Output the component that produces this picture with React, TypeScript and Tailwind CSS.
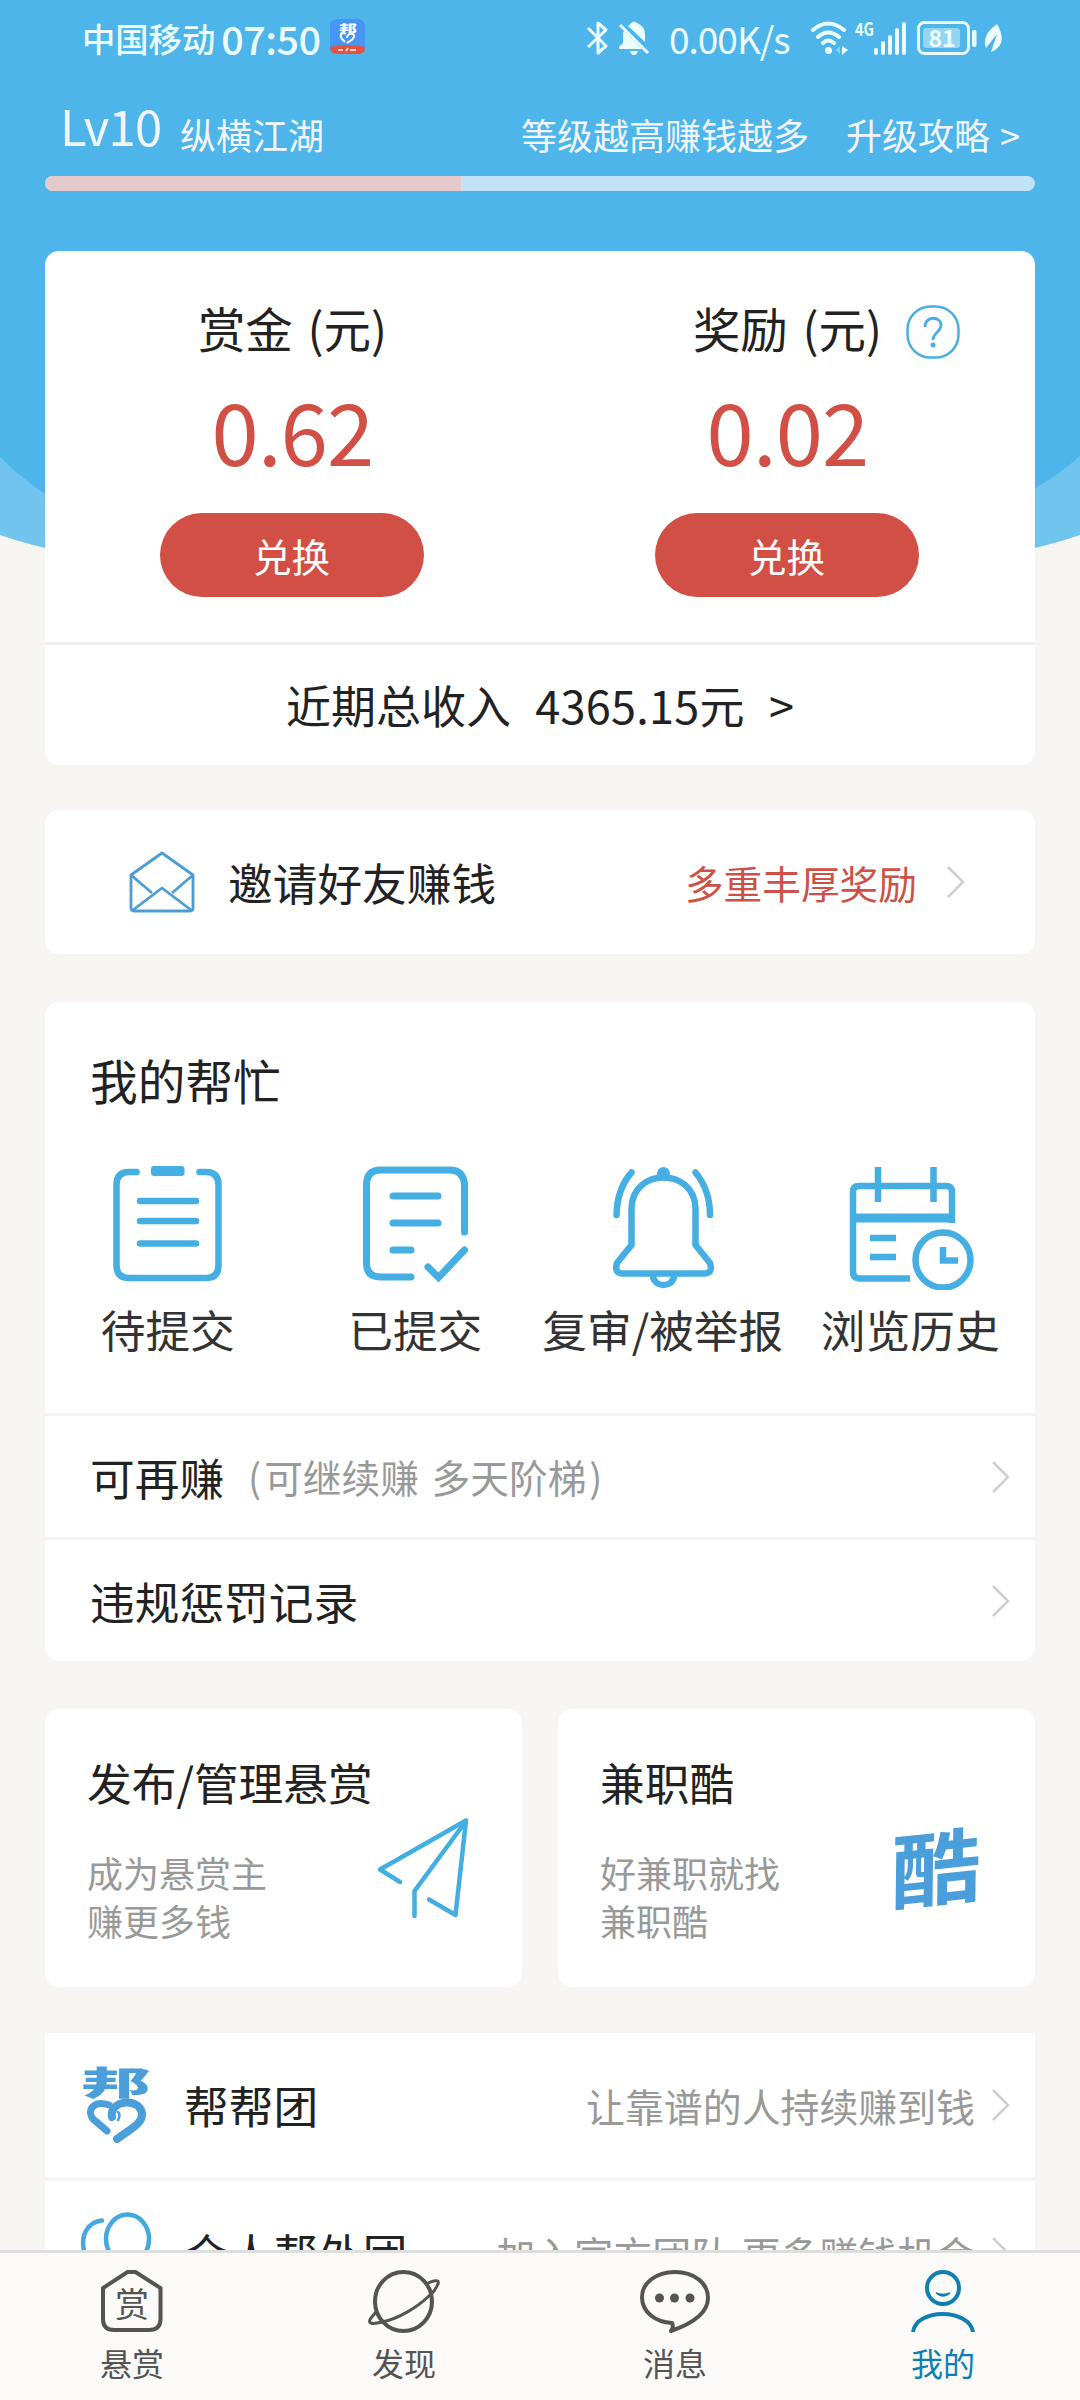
import type { ReactNode } from 'react'

function Chevron() {
  return (
    <svg className="shrink-0" width="20" height="34" viewBox="0 0 20 34" fill="none" stroke="#cfcfcf" strokeWidth="2.5">
      <path d="M1 2 L16 17 L1 32" />
    </svg>
  )
}

function StatusBar() {
  return (
    <div className="flex h-[76px] shrink-0 items-center pl-[82px] pr-[75px] text-[#ecfdff]">
      <span className="text-[33.3px] font-medium leading-none">中国移动</span>
      <span className="ml-[6px] w-[102px] whitespace-nowrap text-[39.500px] font-medium leading-none tracking-[-0.5px]">07:50</span>
      {/* App notification badge */}
      <svg className="ml-[7px] -mt-1 overflow-visible" width="35" height="35" viewBox="0 0 35 35">
        <rect width="35" height="35" rx="7" fill="#4596f5" />
        <path d="M0 28 Q17 24 35 28 Q35 35 28 35 H7 Q0 35 0 28Z" fill="#ec4f3c" />
        <text x="9" y="13.500" fontSize="11" fontWeight="900" textLength="18" lengthAdjust="spacingAndGlyphs" fill="#fff">邦</text>
        <path d="M16 15 C12 12 9 16 12 20 L15 23 M17 19 C17 14 25 13 24 18 C23 21 20 22 17 24" fill="none" stroke="#fff" strokeWidth="2" />
        <path d="M8 31H13M16 32L18 29M20 31H26" stroke="#fff" strokeWidth="1.5" />
      </svg>

      <div className="ml-auto flex -translate-x-px items-center">
        <svg width="23" height="36" viewBox="0 0 23 36" fill="none" stroke="currentColor" strokeWidth="3" strokeLinejoin="round">
          <path d="M2 8 L20 26 L12 33 V3 L20 10 L2 27" />
        </svg>
        <svg className="ml-[9px]" width="32" height="36" viewBox="0 0 32 36">
          <path d="M10 6 Q12 5 13 3 Q16 0 19 3 Q27 6 27 15 V22 Z M6 11 L24 29 H1 V27 L5 23 V15 Q5 12 6 11Z M12 31H20Q19 35 16 35T12 31Z" fill="currentColor" />
          <path d="M2 5 L30 33" stroke="currentColor" strokeWidth="3" />
        </svg>
        <span className="ml-[19px] w-[120px] whitespace-nowrap text-[37px] leading-none tracking-[-1px]">0.00K/s</span>
        <svg className="ml-[21px]" width="38" height="36" viewBox="0 0 38 36" fill="none" stroke="currentColor" strokeWidth="4" strokeLinecap="round">
          <path d="M3 10 Q18 -3 34 10M8 17 Q18 8 29 17M13 23 Q18 18 24 23" />
          <circle cx="18.500" cy="30.500" r="3.500" fill="currentColor" stroke="none" />
          <path d="M26 30 l4 -4 v8z" fill="currentColor" stroke="none" opacity=".4" />
          <path d="M32 26 l6 4 l-6 5z" fill="currentColor" stroke="none" />
        </svg>
        <svg className="ml-[7px] overflow-visible" width="54" height="36" viewBox="0 0 54 36">
          <text x="0" y="16" fontSize="18" fontWeight="700" textLength="19" lengthAdjust="spacingAndGlyphs" fill="currentColor">4G</text>
          <path d="M21 30V33M28 23V33M35 17V33M42 10V33M49 4V33" stroke="currentColor" strokeWidth="4" strokeLinecap="round" />
        </svg>
        <svg className="ml-[8px] overflow-visible" width="61" height="36" viewBox="0 0 61 36">
          <rect x="1.500" y="2.500" width="50" height="31" rx="6" fill="none" stroke="currentColor" strokeWidth="3" />
          <rect x="6" y="8" width="37" height="20" rx="3" fill="currentColor" opacity=".45" />
          <text x="25" y="26.500" textAnchor="middle" fontSize="23" fontWeight="700" fill="currentColor">81</text>
          <rect x="55" y="10" width="4.500" height="17" rx="2" fill="currentColor" />
        </svg>
        <svg className="ml-[4px]" width="22" height="30" viewBox="0 0 22 30">
          <path d="M4 25 Q-1 12 15 1 Q27 22 9 29 L15 11 Z" fill="currentColor" />
        </svg>
      </div>
    </div>
  )
}

function LevelHeader() {
  return (
    <div className="px-[45px]">
      <div className="flex h-[100px] items-start pl-[15px] pr-[15px] text-[#f3f5fd]">
        <span className="mt-[24px] w-[103px] whitespace-nowrap text-[49px] leading-[50px] tracking-[-0.8px]">Lv10</span>
        <span className="ml-[17px] mt-[34px] text-[36px] leading-[48px]">纵横江湖</span>
        <span className="ml-auto mt-[34px] text-[36px] leading-[48px]">等级越高赚钱越多</span>
        <span className="ml-[37px] mt-[34px] text-[36px] leading-[48px] [word-spacing:2px]">升级攻略 &gt;</span>
      </div>
      <div className="h-[15px] overflow-hidden rounded-full bg-[#c2e3f6]">
        <div className="h-full w-[416px] bg-[#e4cacb]" />
      </div>
    </div>
  )
}

function Balance({ title, amount, help }: { title: string; amount: string; help?: boolean }) {
  return (
    <div className="flex w-[495px] flex-col items-center pt-[49px]">
      <div className="relative whitespace-nowrap text-[47.500px] leading-[56px] [word-spacing:4px]">
        {title}
        {help && (
          <svg className="absolute left-full top-[5px] ml-[24px]" width="54" height="54" viewBox="0 0 54 54">
            <rect x="1.500" y="1.500" width="51" height="51" rx="23" fill="none" stroke="#4aaee3" strokeWidth="2.500" />
            <path d="M19 22 C19 10 36 11 35 21 C34 27 27 28 27 35" fill="none" stroke="#4aaee3" strokeWidth="2.800" />
            <circle cx="27" cy="40" r="2.500" fill="#4aaee3" />
          </svg>
        )}
      </div>
      <div className="mt-[23px] text-[85px] leading-[100px] tracking-[-0.8px] text-[#d14f45]">{amount}</div>
      <button className="mt-[34px] h-[84px] w-[264px] -translate-x-px rounded-full bg-[#d14f45] text-[38.500px] leading-none text-white">兑换</button>
    </div>
  )
}

function InviteIcon() {
  return (
    <svg width="66" height="64" viewBox="0 0 66 64" fill="none" stroke="#4b9dd3" strokeWidth="2.800" strokeLinejoin="round">
      <path d="M2 25 L33 3 L64 25 V58 Q64 61 61 61 H5 Q2 61 2 58Z" />
      <path d="M2 25 L23 43M64 25 L43 43M4 60 L33 38 L62 60" />
    </svg>
  )
}

const helpItems: { label: string; icon: ReactNode }[] = [
  {
    label: '待提交',
    icon: (
      <svg className="-translate-x-px" width="120" height="130" viewBox="0 0 120 130" fill="none" stroke="#45aee2" strokeWidth="6.500" strokeLinecap="round">
        <path d="M28.500 12 H21 Q8.500 12 8.500 25 V105 Q8.500 118 21 118 H98 Q110.500 118 110.500 105 V25 Q110.500 12 98 12 H91.500" />
        <path d="M32 41H88M32 61H88M32 83.500H88" />
        <rect x="43" y="6" width="33.500" height="10" rx="3" fill="#45aee2" stroke="none" />
      </svg>
    ),
  },
  {
    label: '已提交',
    icon: (
      <svg width="120" height="130" viewBox="0 0 120 130" fill="none" stroke="#45aee2" strokeWidth="7" strokeLinecap="round">
        <path d="M108.500 72 V24 Q107 10 94 10 H25 Q10.500 10 10.500 25 V103 Q10.500 117 25 117 H55" />
        <path d="M37 36H82M37 63H82M37 90H55" />
        <path d="M72 107 L82.500 117.500 L108.500 90" />
      </svg>
    ),
  },
  {
    label: '复审/被举报',
    icon: (
      <svg width="120" height="130" viewBox="0 0 120 130" fill="none" stroke="#45aee2" strokeWidth="6.500" strokeLinecap="round">
        <path d="M27.500 12.500 Q13 29 12.500 55M91.500 12.500 Q106 30 106 55" />
        <path d="M27.500 49 C27.500 7 91.500 7 91.500 49 V85 L106 103 Q109 113 101 113.500 H18 Q10 113 13 103 L27.500 85Z" strokeLinejoin="round" />
        <path d="M49 116 C50 128 69 128 70 116" />
        <circle cx="59.500" cy="13.500" r="6.500" fill="#45aee2" stroke="none" />
      </svg>
    ),
  },
  {
    label: '浏览历史',
    icon: (
      <svg width="130" height="130" viewBox="0 0 130 130" fill="none" stroke="#45aee2" strokeWidth="6.500">
        <path d="M64 118.500 H13 Q7 118 7 112 V32 Q7 26 13 26 H100 Q106 26 106 32 V63" />
        <path d="M8 58H105" strokeWidth="9" />
        <path d="M32 7V42M87.500 7V42M24 78H50M24 97H50" />
        <circle cx="97" cy="100" r="27.500" />
        <path d="M97 87V100.500H112" />
      </svg>
    ),
  },
]

function PlaneIcon() {
  return (
    <svg width="102" height="110" viewBox="0 0 102 110" fill="none" stroke="#42aee2" strokeWidth="4.500" strokeLinecap="round" strokeLinejoin="round">
      <path d="M29 70 L9 57.500 L95 8.500 L84.500 103 L58 87.500" />
      <path d="M95 9 L43.500 79 V104" />
    </svg>
  )
}

function BangIcon() {
  return (
    <svg className="overflow-visible" width="72" height="82" viewBox="0 0 72 82">
      <text x="1" y="31" fontSize="33" fontWeight="900" textLength="70" lengthAdjust="spacingAndGlyphs" fill="#4a9fdb">邦</text>
      <g fill="none" stroke="#4a9fdb" strokeLinecap="round">
        <path d="M29 41 C14 36 6 46 13 55 L27 67" strokeWidth="7" />
        <path d="M32 53 C29 36 59 33 62 49 C63 60 50 65 37 75" strokeWidth="8" />
        <path d="M38 48 Q41 51 38 56" strokeWidth="2.500" />
      </g>
    </svg>
  )
}

function GroupIcon() {
  return (
    <svg width="72" height="82" viewBox="0 0 72 82" fill="none" stroke="#45a8de" strokeWidth="4.500" strokeLinecap="round">
      <ellipse cx="47.500" cy="27" rx="21.500" ry="24.500" />
      <path d="M22 8.500 C-2 11 -3 46 18 54M18 78 Q21 57 48 57 T70 78" />
    </svg>
  )
}

function GroupRow({ icon, title, note }: { icon: ReactNode; title: string; note: string }) {
  return (
    <div className="flex h-[144px] shrink-0 items-center bg-white pl-[35px] pr-[23px]">
      {icon}
      <span className="ml-[32px] text-[44.700px]">{title}</span>
      <span className="ml-auto mr-[17px] text-[38.900px] text-[#999] [word-spacing:3px]">{note}</span>
      <Chevron />
    </div>
  )
}

const tabs: { label: string; active?: boolean; icon: ReactNode }[] = [
  {
    label: '悬赏',
    icon: (
      <svg width="72" height="70" viewBox="0 0 72 70">
        <path d="M31.500 6 H39.500 L64.500 22 V53 Q64.500 64 53 64 H18 Q7 64 7 53 V22Z" fill="none" stroke="currentColor" strokeWidth="4" />
        <text x="36" y="50.500" textAnchor="middle" fontSize="34" fill="currentColor">赏</text>
      </svg>
    ),
  },
  {
    label: '发现',
    icon: (
      <svg width="80" height="70" viewBox="0 0 80 70" fill="none" stroke="currentColor">
        <ellipse cx="39.500" cy="35.500" rx="28.500" ry="29.500" strokeWidth="4" />
        <path d="M63 17.500 C72 13 77 14 73 20 Q71 25 66 29 C54 41 34 53 18 56 C7 59 3 57 7 52 L12 46" strokeWidth="3" />
      </svg>
    ),
  },
  {
    label: '消息',
    icon: (
      <svg width="76" height="70" viewBox="0 0 76 70" fill="none" stroke="currentColor" strokeWidth="4" strokeLinejoin="round">
        <path d="M35 57 C18 56 5 46 5 31 C5 17 19 6 38 6 C57 6 71 17 71 32 C71 46 57 57 34 65 Q37 61 35 57Z" />
        <g fill="currentColor" stroke="none">
          <circle cx="22.500" cy="32" r="4.500" />
          <circle cx="37.500" cy="32" r="4.500" />
          <circle cx="53" cy="32" r="4.500" />
        </g>
      </svg>
    ),
  },
  {
    label: '我的',
    active: true,
    icon: (
      <svg width="72" height="70" viewBox="0 0 72 70" fill="none" stroke="currentColor" strokeWidth="4">
        <circle cx="36" cy="22" r="16" />
        <path d="M6 66 C9 42 62 42 66 66" />
        <path d="M29 27 Q36 33 43 27 Q36 30 29 27Z" strokeWidth="1.500" />
      </svg>
    ),
  },
]

export default function App() {
  return (
    <div className="relative flex h-[2400px] w-[1080px] flex-col overflow-hidden bg-[#f6f5f2] font-['Noto_Sans_CJK_SC',sans-serif] text-[#222]">
      {/* Curved header backdrop */}
      <svg className="absolute left-0 top-0" width="1080" height="620" viewBox="0 0 1080 620">
        <path d="M0 0H1080V535Q1060 542 1035 548Q540 660 45 548Q20 542 0 535Z" fill="#70c4ee" />
        <path d="M0 0H1080V456Q1060 474 1035 488Q540 720 45 494Q20 477 0 457Z" fill="#4db5e9" />
      </svg>

      <div className="relative flex min-h-0 flex-1 flex-col overflow-hidden">
        <StatusBar />
        <LevelHeader />

        <div className="mx-[45px] mt-[60px] h-[514px] shrink-0 rounded-[14px] bg-white">
          <div className="flex h-[394px] border-b-3 border-[#f0f0f0]">
            <Balance title="赏金 (元)" amount="0.62" />
            <Balance title="奖励 (元)" amount="0.02" help />
          </div>
          <div className="flex h-[120px] items-center justify-center text-[45px]">
            <span>近期总收入</span>
            <span className="ml-[24px] tracking-[0.3px]">4365.15元</span>
            <span className="ml-[24px]">&gt;</span>
          </div>
        </div>

        <div className="mx-[45px] mt-[45px] flex h-[144px] shrink-0 items-center rounded-[14px] bg-white pl-[84px] pr-[68px]">
          <InviteIcon />
          <span className="ml-[33px] text-[44.700px]">邀请好友赚钱</span>
          <span className="ml-auto mr-[30px] text-[38.700px] text-[#cf5046]">多重丰厚奖励</span>
          <Chevron />
        </div>

        <div className="mx-[45px] mt-[48px] h-[659px] shrink-0 rounded-[14px] bg-white">
          <div className="h-[414px] border-b-3 border-[#f4f4f4] pt-[50px]">
            <h2 className="pl-[45px] text-[47.700px] leading-[56px]">我的帮忙</h2>
            <div className="mt-[52px] grid grid-cols-4">
              {helpItems.map((item) => (
                <div key={item.label} className="flex flex-col items-center text-[#333]">
                  {item.icon}
                  <span className="mt-[11px] -translate-x-px whitespace-nowrap text-[44.700px] leading-[56px]">{item.label}</span>
                </div>
              ))}
            </div>
          </div>
          <div className="flex h-[124px] items-center border-b-3 border-[#f4f4f4] pl-[45px] pr-[23px]">
            <span className="text-[44.700px]">可再赚</span>
            <span className="ml-[24px] flex gap-[3px] text-[38.700px] text-[#999] [word-spacing:4px]">
              <span>(</span>
              <span>可继续赚 多天阶梯</span>
              <span>)</span>
            </span>
            <span className="ml-auto"><Chevron /></span>
          </div>
          <div className="flex h-[121px] items-center pl-[45px] pr-[23px]">
            <span className="text-[44.700px]">违规惩罚记录</span>
            <span className="ml-auto"><Chevron /></span>
          </div>
        </div>

        <div className="mx-[45px] mt-[48px] grid h-[278px] shrink-0 grid-cols-2 gap-[36px]">
          <div className="flex justify-between rounded-[14px] bg-white pl-[42px] pr-[49px]">
            <div className="whitespace-nowrap pt-[45px]">
              <h3 className="text-[44.700px] leading-[56px]">发布/管理悬赏</h3>
              <p className="mt-[38px] text-[36px] leading-[48px] text-[#999]">成为悬赏主<br />赚更多钱</p>
            </div>
            <div className="-ml-6 mt-[103px]"><PlaneIcon /></div>
          </div>
          <div className="flex justify-between rounded-[14px] bg-white pl-[42px] pr-[54px]">
            <div className="whitespace-nowrap pt-[45px]">
              <h3 className="text-[44.700px] leading-[56px]">兼职酷</h3>
              <p className="mt-[38px] text-[36px] leading-[48px] text-[#999]">好兼职就找<br />兼职酷</p>
            </div>
            <span className="mt-[110px] h-[90px] -rotate-6 -skew-x-6 scale-y-90 text-[90px] font-bold leading-[90px] text-[#4a9fdb]">酷</span>
          </div>
        </div>

        <div className="mx-[45px] mt-[46px] flex shrink-0 flex-col gap-1 bg-[#f5f5f5]">
          <GroupRow icon={<BangIcon />} title="帮帮团" note="让靠谱的人持续赚到钱" />
          <GroupRow icon={<GroupIcon />} title="众人帮外团" note="加入官方团队 更多赚钱机会" />
        </div>
      </div>

      <nav className="relative grid h-[150px] shrink-0 grid-cols-[264px_280px_262px_274px] border-t-3 border-[#dedede] bg-[#fbfaf8]">
        {tabs.map((tab) => (
          <div key={tab.label} className={`flex flex-col items-center pt-[13px] ${tab.active ? 'text-[#0f7fb2]' : 'text-[#545454]'}`}>
            {tab.icon}
            <span className="mt-[6px] text-[32px] leading-[40px]">{tab.label}</span>
          </div>
        ))}
      </nav>
    </div>
  )
}
